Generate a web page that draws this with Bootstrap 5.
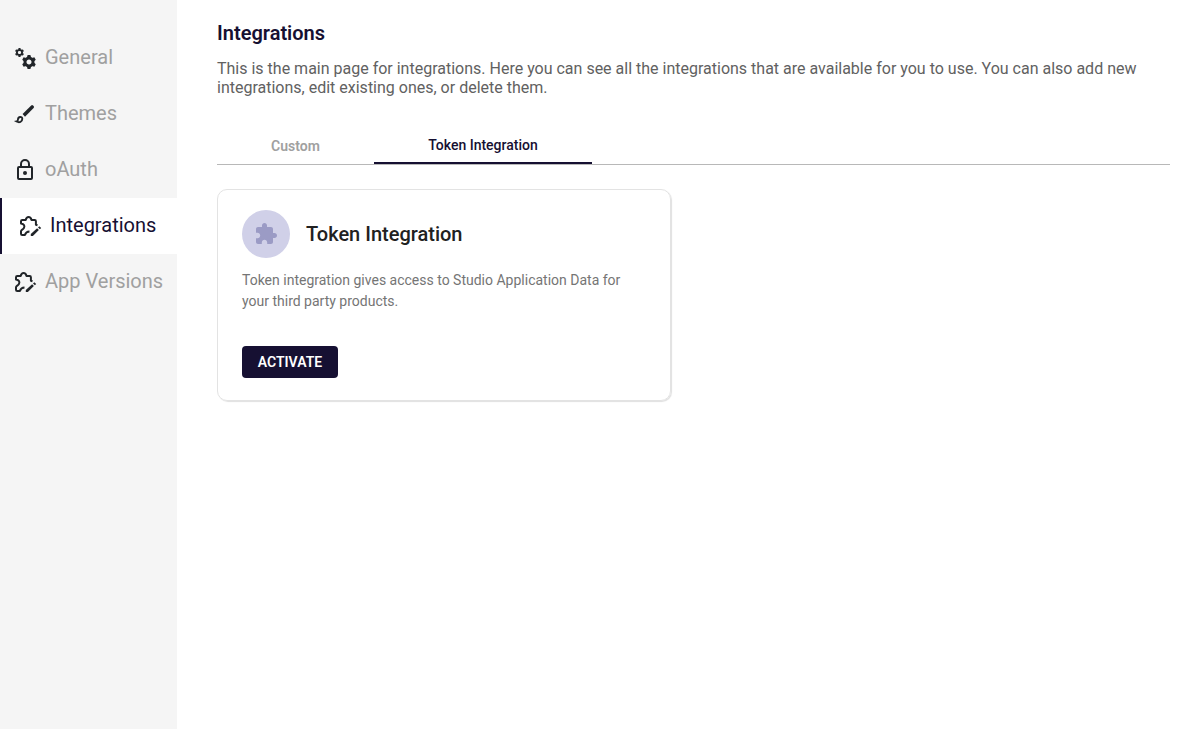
<!DOCTYPE html>
<html lang="en">
<head>
<meta charset="utf-8">
<meta name="viewport" content="width=device-width, initial-scale=1">
<title>Integrations</title>
<link href="https://cdn.jsdelivr.net/npm/bootstrap@5.3.0/dist/css/bootstrap.min.css" rel="stylesheet">
<style>
body{font-family:Roboto,sans-serif;color:#212529;background:#fff}
.side-panel{width:177px;background:#f5f5f5;padding-top:30px}
.side-panel .nav-link{height:56px;padding:0 0 2px 13px;font-size:20px;line-height:24px;color:#a0a0a0;white-space:nowrap}
.side-panel .nav-link.active{background:#fff;color:#161032;border-left:2px solid #161032;padding-left:16px}
.side-panel svg{width:24px;height:24px;flex:none;margin:2px 8px 0 0;color:#212529}
.main-pane{padding:22px 31px 0 40px}
.page-title{font-size:20px;font-weight:600;line-height:23px;color:#161032;margin:0 0 14px}
.page-text{font-size:16px;line-height:19px;color:#616161;margin:0 0 29px}
.tab-row{height:39px;border-bottom:1px solid #b8b8b8;font-size:14px;font-weight:500;line-height:16px}
.tab-row .nav-link{padding:12px 0 0;height:38px;width:157px;text-align:center;color:#a0a0a0;font-weight:600}
.tab-row .nav-link.active{width:218px;padding-top:11px;color:#161032;font-weight:500;border-bottom:2px solid #161032}
.product{width:454px;height:212px;margin-top:24px;border:1px solid #e3e3e3;border-radius:10px;box-shadow:1px 1px 1px 0 #e0e0e0;padding:20px 24px 0}
.round-icon{width:48px;height:48px;background:#d0d0e8;color:#9b9bc5}
.product h2{font-size:20px;font-weight:500;line-height:24px;color:#212121}
.product p{font-size:14px;line-height:21px;color:#757575;margin:12px 0 34px}
.btn-activate{width:96px;height:32px;background:#161032!important;color:#fff!important;border:0;border-radius:4px;font-size:14px;font-weight:600;line-height:32px;padding:0}
</style>
</head>
<body>
<svg class="d-none">
  <symbol id="gear" viewBox="-10 -10 20 20">
    <circle r="5.7" fill="none" stroke="currentColor" stroke-width="4.2"/>
    <g fill="currentColor"><path id="tooth" d="M-3-6.500-2-10H2L3-6.500Z"/><use href="#tooth" transform="rotate(60)"/><use href="#tooth" transform="rotate(120)"/><use href="#tooth" transform="rotate(180)"/><use href="#tooth" transform="rotate(240)"/><use href="#tooth" transform="rotate(300)"/></g>
  </symbol>
  <symbol id="puzzle-edit" viewBox="0 0 24 24">
    <path fill="none" stroke="currentColor" stroke-width="2" stroke-linejoin="round" d="M19.500 11.300 17.900 10.800V7.200Q17.900 6 16.700 6H13.500Q12.800 3 10.600 3Q8.400 3 7.700 6H4.300Q3 6 3 7.200V9.600C6.300 10.200 7 12.100 5.900 14C4.900 15.800 3 15.700 3 17.300V19.800Q3 21 4.200 21H6.900C7.500 18.700 9 17.700 11.500 17.600"/>
    <path fill="currentColor" d="M12.800 20.100 19.100 14.300 20.900 16.100 14.900 22H12.800ZM20 13.500 21.300 12.300 23.200 14 21.900 15.300Z"/>
  </symbol>
</svg>
<div class="d-flex vh-100">
  <nav class="nav flex-column flex-nowrap side-panel flex-shrink-0">
    <a class="nav-link d-flex align-items-center" href="#"><svg viewBox="0 0 24 24"><use href="#gear" x="2" y="2" width="9" height="9"/><use href="#gear" x="9" y="9" width="14" height="14"/></svg><span>General</span></a>
    <a class="nav-link d-flex align-items-center" href="#"><svg viewBox="0 0 24 24"><path d="M9.600 12.100 18.200 3.500Q19.100 2.700 20 3.500L20.600 4.100Q21.500 5 20.600 6L12 14.700Z" fill="currentColor"/><path d="M3.600 19.500Q5 19.200 5 17.200C5.200 14.600 9.200 14.100 9.300 16.800C9.300 19.900 6.300 21 3.600 19.500Z" fill="none" stroke="currentColor" stroke-width="1.900"/></svg><span>Themes</span></a>
    <a class="nav-link d-flex align-items-center" href="#"><svg viewBox="0 0 24 24"><path d="M8 8.500V6a4 4 0 0 1 8 0v2.500" fill="none" stroke="currentColor" stroke-width="2"/><rect x="5" y="9" width="14" height="12" rx="1" fill="none" stroke="currentColor" stroke-width="2"/><circle cx="12" cy="15" r="2" fill="currentColor"/></svg><span>oAuth</span></a>
    <a class="nav-link active d-flex align-items-center" href="#"><svg><use href="#puzzle-edit"/></svg><span>Integrations</span></a>
    <a class="nav-link d-flex align-items-center" href="#"><svg><use href="#puzzle-edit"/></svg><span>App Versions</span></a>
  </nav>
  <main class="main-pane flex-grow-1">
    <h1 class="page-title">Integrations</h1>
    <p class="page-text">This is the main page for integrations. Here you can see all the integrations that are available for you to use. You can also add new integrations, edit existing ones, or delete them.</p>
    <div class="nav tab-row">
      <a class="nav-link" href="#">Custom</a>
      <a class="nav-link active" href="#">Token Integration</a>
    </div>
    <section class="product">
      <div class="d-flex align-items-center gap-3">
        <div class="round-icon rounded-circle d-flex align-items-center justify-content-center"><svg width="24" height="24" viewBox="0 0 24 24"><path fill="currentColor" d="M20.500 11H19V7c0-1.100-.9-2-2-2h-4V3.500C13 2.120 11.880 1 10.500 1S8 2.120 8 3.500V5H4c-1.100 0-1.990.9-1.990 2v3.800H3.500c1.490 0 2.700 1.210 2.700 2.700s-1.210 2.700-2.700 2.700H2V20c0 1.100.9 2 2 2h3.800v-1.500c0-1.490 1.210-2.700 2.700-2.700s2.700 1.210 2.700 2.700V22H17c1.100 0 2-.9 2-2v-4h1.500c1.380 0 2.500-1.120 2.500-2.500S21.880 11 20.500 11z"/></svg></div>
        <h2 class="mb-0">Token Integration</h2>
      </div>
      <p>Token integration gives access to Studio Application Data for your third party products.</p>
      <button class="btn btn-activate" type="button">ACTIVATE</button>
    </section>
  </main>
</div>
<script src="https://cdn.jsdelivr.net/npm/bootstrap@5.3.0/dist/js/bootstrap.bundle.min.js"></script>
</body>
</html>
